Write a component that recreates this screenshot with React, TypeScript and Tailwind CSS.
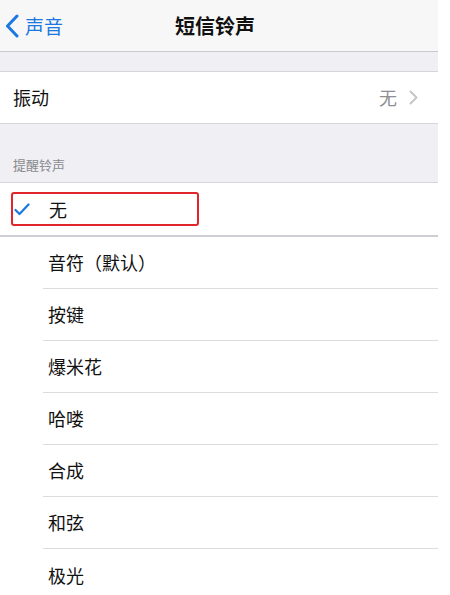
import React from 'react'

const TONES = ['音符（默认）', '按键', '爆米花', '哈喽', '合成', '和弦', '极光']

const FONT = { fontFamily: '"Noto Sans CJK SC", "Noto Sans", sans-serif' }

function BackChevron() {
  return (
    <svg width="14" height="24" viewBox="0 0 14 24" aria-hidden="true">
      <path d="M12 2 L2.5 12 L12 22" fill="none" stroke="#1a78e0" strokeWidth="3" strokeLinecap="round" strokeLinejoin="round" />
    </svg>
  )
}

function Check() {
  return (
    <svg width="16" height="13" viewBox="0 0 16 13" aria-hidden="true">
      <path d="M1.5 7 L5.5 11 L14.5 1.5" fill="none" stroke="#1a78e0" strokeWidth="2.2" strokeLinecap="round" strokeLinejoin="round" />
    </svg>
  )
}

export default function App() {
  return (
    <div className="min-h-[595px] w-[450px] bg-white" style={FONT}>
      <div className="w-[438px]">
        {/* 导航栏 */}
        <div className="grid h-[52px] grid-cols-[1fr_auto_1fr] items-center border-b border-[#c9c9ce] bg-[#f7f7f8]">
          <div className="flex items-center gap-[6px] pl-[5px] text-[19px] text-[#1a78e0]">
            <BackChevron />
            <span className="leading-none">声音</span>
          </div>
          <div className="pr-[8px] text-[20px] font-bold text-[#111]">短信铃声</div>
          <div />
        </div>

        <div className="h-[20px] border-b border-[#d6d6da] bg-[#efeff4]" />

        <div className="flex h-[52px] items-center justify-between border-b border-[#d6d6da] bg-white pl-[13px] pr-[20px]">
          <span className="text-[18px] text-[#111]">振动</span>
          <span className="flex items-center gap-[12px] text-[18px] text-[#8e8e93]">
            无
            <svg width="9" height="15" viewBox="0 0 9 15" aria-hidden="true">
              <path d="M1.5 1.5 L7.5 7.5 L1.5 13.5" fill="none" stroke="#c4c4c8" strokeWidth="1.8" strokeLinecap="round" strokeLinejoin="round" />
            </svg>
          </span>
        </div>

        <div className="flex h-[59px] items-end border-b border-[#d6d6da] bg-[#efeff4] pb-[8px] pl-[13px] text-[13px] text-[#8a8a8f]">
          提醒铃声
        </div>

        <div className="flex h-[54px] items-center border-b-2 border-[#cfcfd3] bg-white pl-[11px]">
          <div className="flex h-[34px] w-[188px] items-center rounded-[3px] border-2 border-[#e0262b] pl-[1px]">
            <Check />
            <span className="ml-[19px] text-[18px] text-[#111]">无</span>
          </div>
        </div>

        {TONES.map((t, i) => (
          <div key={t} className="bg-white pl-[43px]">
            <div
              className={
                i < TONES.length - 1
                  ? 'flex h-[52px] items-center border-b border-[#dcdce0] pl-[5px] text-[18px] text-[#111]'
                  : 'flex h-[52px] items-center pl-[5px] text-[18px] text-[#111]'
              }
            >
              {t}
            </div>
          </div>
        ))}
      </div>
    </div>
  )
}
